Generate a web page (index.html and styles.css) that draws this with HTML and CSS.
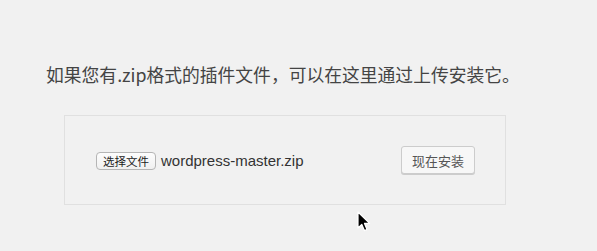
FILE: index.html
```html
<!DOCTYPE html>
<html lang="zh-CN">
<head>
<meta charset="utf-8">
<title>上传插件</title>
<link rel="stylesheet" href="styles.css">
</head>
<body>
<div class="page">
  <p class="install-help">如果您有.zip格式的插件文件，可以在这里通过上传安装它。</p>
  <form class="upload-form">
    <div class="file-field">
      <button type="button" class="file-btn">选择文件</button>
      <span class="file-name">wordpress-master.zip</span>
    </div>
    <button type="button" class="install-btn">现在安装</button>
  </form>
</div>
<svg class="cursor" width="14" height="22" viewBox="0 0 14 22" aria-hidden="true">
  <path d="M1 1 L1 17 L4.8 13.4 L7.4 19.6 L10 18.5 L7.5 12.4 L12.6 12.4 Z" fill="#000" stroke="#fff" stroke-width="1.2" stroke-linejoin="round"/>
</svg>
</body>
</html>
```
FILE: styles.css
```css
html, body {
  margin: 0;
  padding: 0;
  background: #f1f1f1;
}
body {
  width: 597px;
  height: 251px;
  overflow: hidden;
  position: relative;
  font-family: "Noto Sans CJK SC", "Noto Sans", sans-serif;
}
.page {
  padding: 62px 0 0 46px;
}
.install-help {
  margin: 0;
  font-size: 17.8px;
  font-weight: 400;
  line-height: 24px;
  color: #444;
  white-space: nowrap;
}
.upload-form {
  margin: 29px 0 0 18px;
  width: 440px;
  height: 88px;
  border: 1px solid #e0e0e0;
  box-sizing: content-box;
  display: flex;
  align-items: center;
  justify-content: space-between;
  padding: 0;
}
.file-field {
  display: flex;
  align-items: center;
  margin-left: 31px;
  margin-top: 2px;
}
.file-btn {
  font-family: "Noto Sans CJK SC", sans-serif;
  font-size: 11.5px;
  line-height: 14px;
  height: 18px;
  width: 60px;
  padding: 0;
  color: #222;
  background: linear-gradient(#fdfdfd, #f0f0f0);
  border: 1px solid #b5b5b5;
  border-radius: 4px;
}
.file-name {
  margin-left: 5px;
  font-family: "Liberation Sans", "Noto Sans", sans-serif;
  font-size: 15px;
  color: #333;
  position: relative;
  top: -1px;
}
.install-btn {
  margin-right: 30px;
  width: 74px;
  height: 28px;
  padding: 0;
  font-family: "Noto Sans CJK SC", sans-serif;
  font-size: 13px;
  color: #555;
  background: #f7f7f7;
  border: 1px solid #ccc;
  border-radius: 3px;
  box-shadow: 0 1px 0 #ccc;
}
.cursor {
  position: absolute;
  left: 357px;
  top: 211px;
}
```
